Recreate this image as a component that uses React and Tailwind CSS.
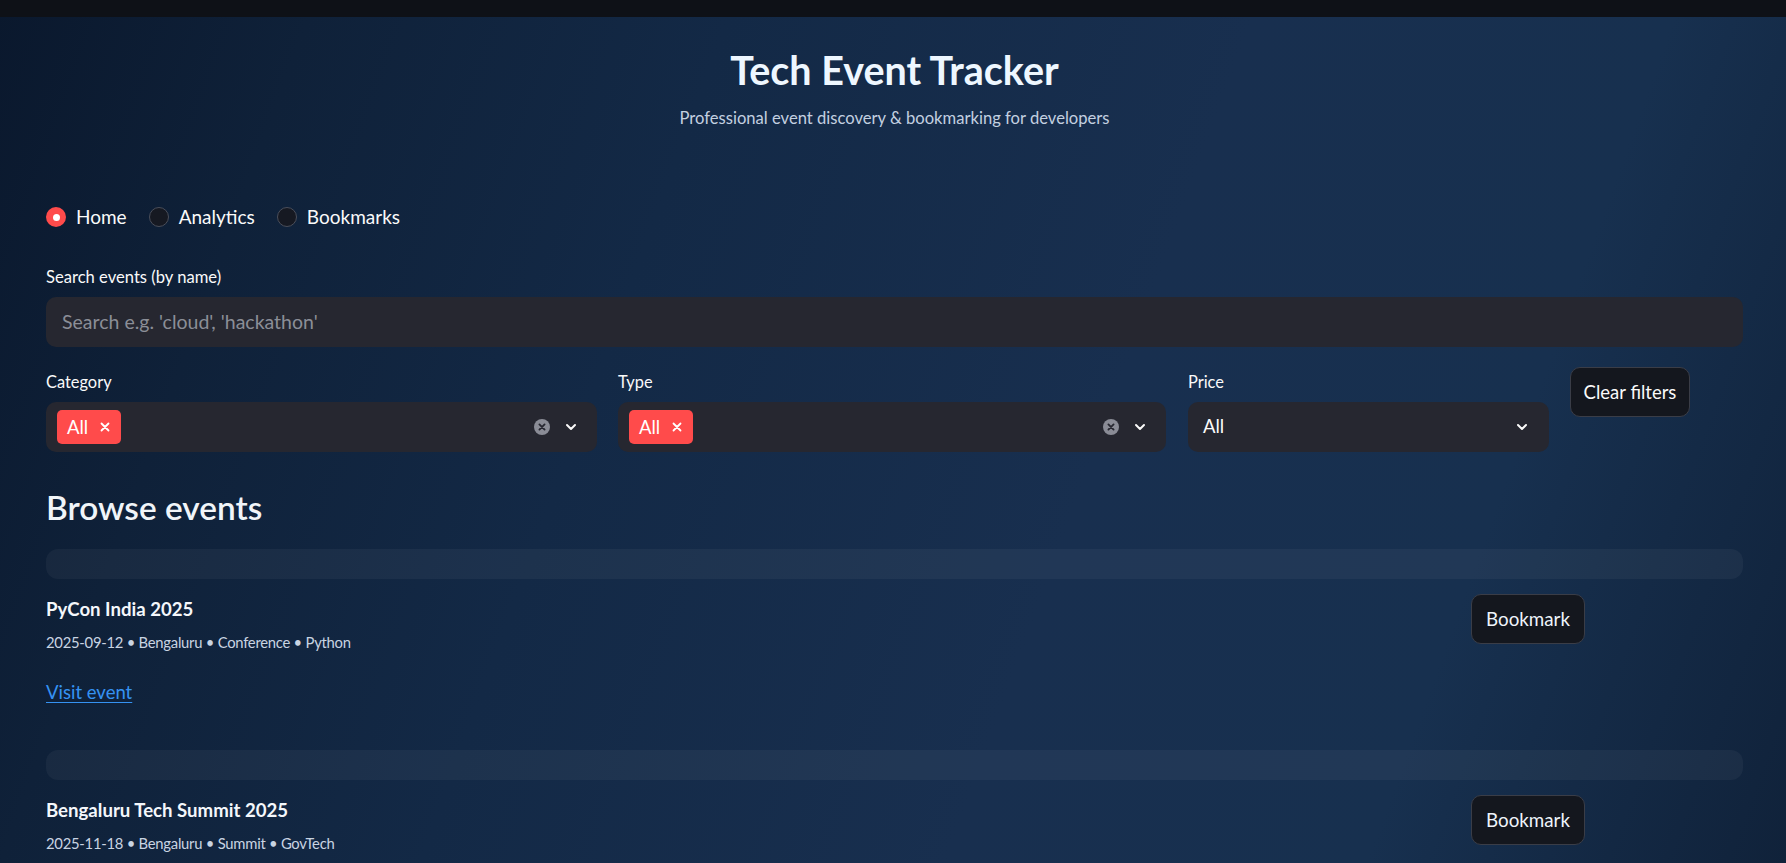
import React from "react";

function Chevron() {
  return (
    <svg width="16" height="16" viewBox="0 0 24 24" fill="none" stroke="#fafafa" strokeWidth="3" strokeLinecap="round" strokeLinejoin="round">
      <path d="M6 9l6 6 6-6" />
    </svg>
  );
}

function ClearIcon() {
  return (
    <svg width="16" height="16" viewBox="0 0 16 16">
      <circle cx="8" cy="8" r="8" fill="#8a8c96" />
      <path d="M5.4 5.4l5.2 5.2M10.6 5.4l-5.2 5.2" stroke="#262730" strokeWidth="1.8" strokeLinecap="round" />
    </svg>
  );
}

function Tag() {
  return (
    <div className="flex h-[34px] items-center rounded-[5px] bg-[#ff4b4b] pl-[10px] pr-[11px] text-[18.5px] leading-[22px] text-white">
      <span>All</span>
      <svg className="ml-[12px]" width="10" height="10" viewBox="0 0 10 10">
        <path d="M1.5 1.5l7 7M8.5 1.5l-7 7" stroke="#ffffff" strokeWidth="1.8" strokeLinecap="round" />
      </svg>
    </div>
  );
}

function MultiSelect({ label }) {
  return (
    <div className="flex flex-col">
      <div className="h-[30px] text-[16.4px] leading-[30px] text-[#fafafa]">{label}</div>
      <div className="mt-[5px] flex h-[50px] items-center rounded-[10px] bg-[#262730] pl-[11px] pr-[18px]">
        <Tag />
        <div className="flex-1" />
        <ClearIcon />
        <div className="ml-[13px]">
          <Chevron />
        </div>
      </div>
    </div>
  );
}

function Radio({ label, selected }) {
  return (
    <div className="flex items-center">
      {selected ? (
        <div className="flex h-[20px] w-[20px] items-center justify-center rounded-full bg-[#ff4b4b]">
          <div className="h-[7px] w-[7px] rounded-full bg-white" />
        </div>
      ) : (
        <div className="h-[20px] w-[20px] rounded-full border border-[#4a4e5a] bg-[#161922]" />
      )}
      <span className="ml-[10px] text-[19px] leading-[20px] text-[#fafafa]">{label}</span>
    </div>
  );
}

function EventCard({ title, meta, showLink = true }) {
  return (
    <div className="flex flex-col">
      <div className="h-[30px] rounded-[12px] bg-white/[0.045]" />
      <div className="mt-[15px] flex items-start">
        <div className="flex flex-1 flex-col pt-[4px]">
          <div className="text-[18.6px] font-bold leading-[22px] text-[#f4f7fb]">{title}</div>
          <div className="mt-[12px] text-[14.8px] leading-[20px] tracking-[-0.25px] text-[#c9d4e2]">{meta}</div>
          {showLink ? (
            <a className="mt-[29px] w-fit text-[18.5px] leading-[22px] text-[#3592f2] underline underline-offset-[3px]" href="#">
              Visit event
            </a>
          ) : null}
        </div>
        <div className="w-[272px]">
          <button className="flex h-[50px] w-[114px] items-center justify-center rounded-[10px] border border-[#3a3d47] bg-[#14171e] text-[18.8px] leading-[22px] text-[#eef4fb]">
            Bookmark
          </button>
        </div>
      </div>
      <div className="h-[47px]" />
    </div>
  );
}

export default function App() {
  return (
    <div className="h-screen overflow-hidden bg-[linear-gradient(110deg,#0a182d_0%,#0f2139_15%,#132946_35%,#182f4f_60%,#17304f_80%,#10223a_100%)] font-['Lato',sans-serif]">
      <div className="h-[17px] bg-[#0e1117]" />
      <div className="pl-[46px] pr-[43px]">
        <div className="mt-[30px] text-center text-[39.5px] font-bold leading-[46px] text-[#eef7ff]">Tech Event Tracker</div>
        <div className="mt-[15px] text-center text-[16.6px] leading-[20px] text-[#c3d0e0]">
          Professional event discovery &amp; bookmarking for developers
        </div>

        <div className="mt-[79px] flex h-[20px] items-center gap-[22px]">
          <Radio label="Home" selected />
          <Radio label="Analytics" />
          <Radio label="Bookmarks" />
        </div>

        <div className="mt-[35px] h-[30px] text-[16.6px] leading-[30px] text-[#fafafa]">Search events (by name)</div>
        <div className="mt-[5px] flex h-[50px] items-center rounded-[10px] bg-[#262730] px-[16px] text-[19.5px] text-[#8b8e97]">
          Search e.g. 'cloud', 'hackathon'
        </div>

        <div className="mt-[20px] flex items-start">
          <div className="w-[551px]">
            <MultiSelect label="Category" />
          </div>
          <div className="ml-[21px] w-[548px]">
            <MultiSelect label="Type" />
          </div>
          <div className="ml-[22px] w-[361px]">
            <div className="h-[30px] text-[16.4px] leading-[30px] text-[#fafafa]">Price</div>
            <div className="mt-[5px] flex h-[50px] items-center rounded-[10px] bg-[#262730] pl-[15px] pr-[19px] text-[18.5px] text-[#fafafa]">
              <span className="flex-1">All</span>
              <Chevron />
            </div>
          </div>
          <div className="ml-[21px]">
            <button className="flex h-[50px] w-[120px] items-center justify-center rounded-[10px] border border-[#3a3d47] bg-[#14171e] text-[18.5px] leading-[22px] text-[#fafafa]">
              Clear filters
            </button>
          </div>
        </div>

        <div className="mt-[36px] text-[33.4px] font-semibold leading-[39px] text-[#f1f5f9]">Browse events</div>

        <div className="mt-[22px] flex flex-col">
          <EventCard title="PyCon India 2025" meta="2025-09-12 • Bengaluru • Conference • Python" />
          <EventCard title="Bengaluru Tech Summit 2025" meta="2025-11-18 • Bengaluru • Summit • GovTech" showLink={false} />
        </div>
      </div>
    </div>
  );
}
